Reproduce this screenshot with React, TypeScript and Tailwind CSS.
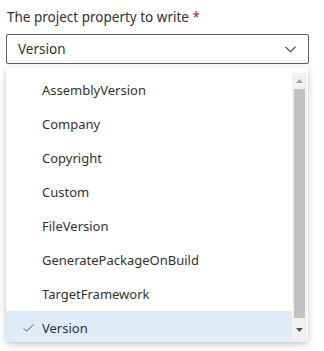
import React from 'react';

const options = [
  'AssemblyVersion',
  'Company',
  'Copyright',
  'Custom',
  'FileVersion',
  'GeneratePackageOnBuild',
  'TargetFramework',
  'Version',
];

const selected = 'Version';

const App: React.FC = () => {
  return (
    <div
      className="w-[324px] h-[351px] bg-white overflow-hidden text-[13px] text-[#323130]"
      style={{ fontFamily: '"Segoe UI", "Noto Sans", sans-serif' }}
    >
      <div className="pl-[7px] pt-[7px] h-[34px] leading-[20px] text-[13.5px]">
        The project property to write <span className="text-[#a4262c]">*</span>
      </div>

      {/* Select box */}
      <div className="ml-[6px] w-[303px] h-[30px] border border-[#605e5c] rounded-[2px] flex items-center justify-between pl-[11px] pr-[12px]">
        <span className="leading-[20px] text-[13.5px]">{selected}</span>
        <svg width="11" height="7" viewBox="0 0 11 7" fill="none">
          <path d="M0.5 0.8 L5.5 5.8 L10.5 0.8" stroke="#323130" strokeWidth="1.1" />
        </svg>
      </div>

      {/* Dropdown */}
      <div className="ml-[6px] mt-[3px] w-[302px] h-[275px] rounded-b-[4px] bg-white shadow-[0_3px_10px_rgba(0,0,0,0.18),0_1px_3px_rgba(0,0,0,0.1)] overflow-hidden flex pt-[6px]">
        <div className="flex-1 flex flex-col">
          {options.map((opt) => (
            <div
              key={opt}
              className={`h-[34px] shrink-0 flex items-center ${opt === selected ? 'bg-[#deecf9]' : ''}`}
            >
              <div className="w-[36px] flex justify-end pr-[8px]">
                {opt === selected && (
                  <svg width="11" height="8" viewBox="0 0 11 8" fill="none">
                    <path d="M0.6 4.2 L3.6 7.2 L10.4 0.6" stroke="#605e5c" strokeWidth="1" />
                  </svg>
                )}
              </div>
              <span className="leading-[20px]">{opt}</span>
            </div>
          ))}
        </div>

        {/* Scrollbar */}
        <div className="w-[15px] mr-[1px] bg-[#f1f1f1] flex flex-col">
          <div className="h-[16px] flex items-center justify-center">
            <svg width="7" height="4" viewBox="0 0 7 4">
              <path d="M0 4 L3.5 0 L7 4 Z" fill="#a3a3a3" />
            </svg>
          </div>
          <div className="mx-[2px] h-[229px] bg-[#c1c1c1]" />
          <div className="h-[23px] flex items-center justify-center">
            <svg width="7" height="4" viewBox="0 0 7 4">
              <path d="M0 0 L7 0 L3.5 4 Z" fill="#505050" />
            </svg>
          </div>
        </div>
      </div>
    </div>
  );
};

export default App;
